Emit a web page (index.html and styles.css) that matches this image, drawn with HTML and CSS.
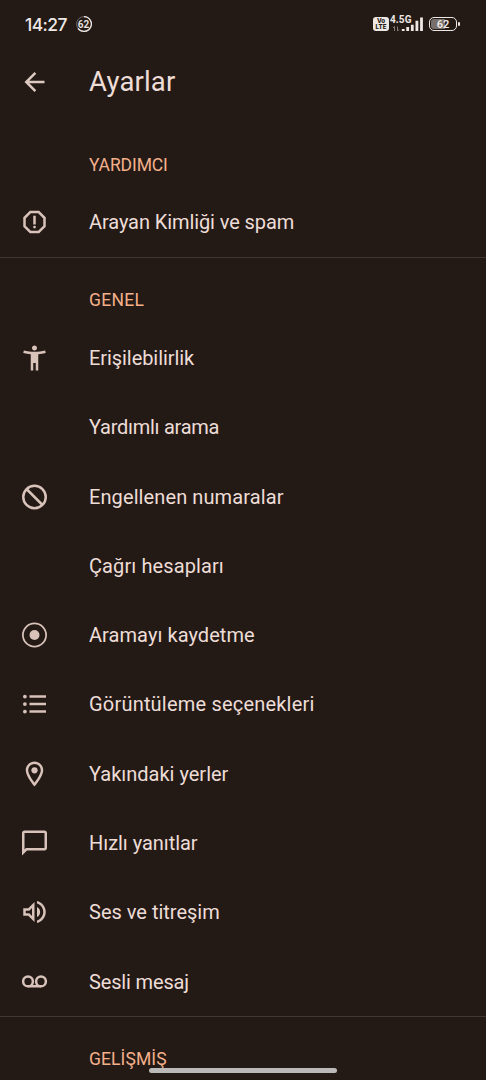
FILE: index.html
```html
<!DOCTYPE html>
<html lang="tr">
<head>
<meta charset="utf-8">
<title>Ayarlar</title>
<link rel="stylesheet" href="styles.css">
</head>
<body>
<div class="screen">
  <header class="status">
    <span class="clock">14:27</span>
    <span class="ring"><svg viewBox="0 0 18 18"><circle class="ring-dim" cx="9" cy="9" r="7.4"/><path class="ring-lit" d="M9 1.6A7.4 7.4 0 1 1 3 13.4"/></svg><b>62</b></span>
    <span class="volte"><b>Vo</b><b>LTE</b></span>
    <span class="network">
      <b class="gen">4.5G</b>
      <svg viewBox="0 0 34 18"><path class="data" d="M4.5 14.5V10M3 11.5l1.5-1.6M7.5 10v4.5M9 13l-1.5 1.6"/><path class="bars" d="M13.2 12.5v2M17.7 10.5v4M22.3 8.3v6.200M26.900 4.200v10.300M31.500 1v13.500"/></svg>
    </span>
    <span class="battery"><b>62</b></span>
  </header>
  <div class="appbar">
    <svg class="icon" viewBox="0 0 24 24"><path d="M20 11H7.830l5.590-5.590L12 4l-8 8 8 8 1.410-1.410L7.830 13H20z"/></svg>
    <h1>Ayarlar</h1>
  </div>
  <section class="group helper">
    <h2 class="l-yardimci">YARDIMCI</h2>
    <div class="row"><svg class="icon" viewBox="0 0 24 24"><path fill-rule="evenodd" d="M15.730 3H8.270L3 8.270v7.460L8.270 21h7.460L21 15.730V8.270zM19 14.900 14.900 19H9.100L5 14.900V9.100L9.100 5h5.800L19 9.100zM11 7h2v7h-2z"/><circle cx="12" cy="16" r="1.100"/></svg><span class="l-spam">Arayan Kimliği ve spam</span></div>
  </section>
  <section class="group general">
    <h2 class="l-genel">GENEL</h2>
    <div class="row"><svg class="icon" viewBox="0 0 24 24"><path d="M20.500 6c-2.610.7-5.670 1-8.500 1s-5.890-.3-8.500-1L3 8c1.860.5 4 .83 6 1v13h2v-6h2v6h2V9c2-.17 4.140-.5 6-1zM12 6c1.100 0 2-.9 2-2s-.9-2-2-2-2 .9-2 2 .9 2 2 2z"/></svg><span class="l-access">Erişilebilirlik</span></div>
    <div class="row"><i class="icon"></i><span class="l-assist">Yardımlı arama</span></div>
    <div class="row"><svg class="icon" viewBox="0 0 24 24"><g class="line"><circle cx="12" cy="12" r="9"/><path d="m5.600 5.600 12.800 12.800"/></g></svg><span class="l-block">Engellenen numaralar</span></div>
    <div class="row"><i class="icon"></i><span class="l-accounts">Çağrı hesapları</span></div>
    <div class="row"><svg class="icon" viewBox="0 0 24 24"><circle class="thin" cx="12" cy="12" r="9.300"/><circle cx="12" cy="12" r="4"/></svg><span class="l-record">Aramayı kaydetme</span></div>
    <div class="row"><svg class="icon" viewBox="0 0 24 24"><path d="M8 5h13.200v2H8zM8 11h13.200v2H8zM8 17h13.200v2H8z"/><circle cx="4.300" cy="6" r="1.500"/><circle cx="4.300" cy="12" r="1.500"/><circle cx="4.300" cy="18" r="1.500"/></svg><span class="l-display">Görüntüleme seçenekleri</span></div>
    <div class="row"><svg class="icon" viewBox="0 0 24 24"><path d="M12 2C8.130 2 5 5.130 5 9c0 5.250 7 13 7 13s7-7.750 7-13c0-3.870-3.130-7-7-7zM7 9c0-2.760 2.240-5 5-5s5 2.240 5 5c0 2.880-2.880 7.190-5 9.880C9.920 16.210 7 11.850 7 9z"/><circle cx="12" cy="9" r="2.500"/></svg><span class="l-nearby">Yakındaki yerler</span></div>
    <div class="row"><svg class="icon" viewBox="0 0 24 24"><path d="M20 2H4c-1.100 0-2 .9-2 2v18l4-4h14c1.100 0 2-.9 2-2V4c0-1.100-.9-2-2-2zm0 14H5.170L4 17.170V4h16z"/></svg><span class="l-quick">Hızlı yanıtlar</span></div>
    <div class="row"><svg class="icon" viewBox="0 0 24 24"><path d="M3 9v6h4l5 5V4L7 9zm7-.170v6.340L7.830 13H5v-2h2.830zM16.500 12A4.500 4.500 0 0 0 14 7.970v8.050A4.470 4.470 0 0 0 16.500 12zM14 3.230v2.060c2.890.86 5 3.540 5 6.710s-2.110 5.850-5 6.710v2.060c4.010-.91 7-4.490 7-8.770s-2.990-7.860-7-8.770z"/></svg><span class="l-sound">Ses ve titreşim</span></div>
    <div class="row"><svg class="icon" viewBox="0 0 24 24"><g class="line"><circle cx="6.800" cy="11.500" r="3.900"/><circle cx="17.200" cy="11.500" r="3.900"/><path d="M6.800 15.400h10.400"/></g></svg><span class="l-voice">Sesli mesaj</span></div>
  </section>
  <section class="group">
    <h2 class="l-advanced">GELİŞMİŞ</h2>
  </section>
  <div class="home-bar"></div>
</div>
</body>
</html>
```
FILE: styles.css
```css
* { box-sizing: border-box; }
body { margin: 0; background: #231a16; }
.screen { position: relative; width: 486px; height: 1080px; overflow: hidden; background: #231a16; color: #eeddd6; font-family: Roboto, "Noto Sans", sans-serif; }
.status { display: flex; align-items: center; height: 48px; padding: 0 26px 0 25px; color: #eee8e5; }
.clock { width: 42px; padding-top: 2px; font: 500 17.5px/20px Inter, sans-serif; letter-spacing: -.6px; white-space: nowrap; }
.ring { position: relative; display: flex; align-items: center; justify-content: center; width: 18px; height: 18px; margin-left: 7.5px; }
.ring svg { position: absolute; inset: 0; width: 18px; height: 18px; fill: none; }
.ring-dim { stroke: #716965; stroke-width: 1; }
.ring-lit { stroke: #eee8e5; stroke-width: 1.3; }
.ring b { padding-top: 1px; font: 600 10px/10px Roboto, sans-serif; }
.volte { display: flex; flex-direction: column; align-items: center; justify-content: center; width: 16px; height: 14px; margin-left: auto; border-radius: 3px; background: #eee8e5; color: #231a16; }
.volte b { font: 800 6.2px/6px Inter, sans-serif; }
.network { position: relative; width: 34px; height: 18px; margin-left: 1px; }
.network svg { display: block; width: 34px; height: 18px; fill: none; transform: translateY(1.5px); }
.gen { position: absolute; left: 0; top: 0; font: 700 10px/10px Roboto, sans-serif; letter-spacing: .1px; }
.bars { stroke: #eee8e5; stroke-width: 2.8; }
.data { stroke: #817975; stroke-width: 1; }
.battery { position: relative; display: flex; align-items: center; justify-content: center; width: 28px; height: 14px; margin: 0 3px 0 5px; border: 1.5px solid #eee8e5; border-radius: 5px; background: linear-gradient(90deg, #77706c 58%, transparent 58%); background-clip: content-box; padding: 1px; }
.battery::after { content: ""; position: absolute; right: -4px; top: 3.5px; width: 2px; height: 4px; background: #eee8e5; border-radius: 1px; }
.battery b { padding-top: 1px; font: 600 11px/11px Roboto, sans-serif; }
.appbar { display: flex; align-items: center; height: 68px; padding-left: 19px; }
.icon { flex: none; width: 31px; height: 30px; fill: #d8c2b9; }
.appbar .icon { fill: #ddc9c0; }
.line { fill: none; stroke: #d8c2b9; stroke-width: 2; }
.thin { fill: none; stroke: #d8c2b9; stroke-width: 1.4; }
h1 { margin: 0 0 0 39px; font-size: 27.5px; line-height: 34px; font-weight: 400; letter-spacing: .15px; }
.group { padding-top: 22px; border-bottom: 1px solid #403632; }
h2 { margin: 0; padding-left: 89px; height: 43.3px; font-size: 17.5px; line-height: 41px; font-weight: 400; color: #f4b08a; }
.helper { height: 142px; padding-top: 29px; }
.helper h2 { height: 42.500px; }
.general { height: 759px; }
.row { display: flex; align-items: center; height: 69.3px; padding-left: 19px; }
.row span { margin-left: 39px; font-size: 20px; line-height: 26px; white-space: nowrap; }
.l-yardimci { letter-spacing: -.1px; }
.l-genel { letter-spacing: .3px; }
.l-advanced { letter-spacing: .1px; }
.l-spam { letter-spacing: -.09px; }
.l-access { letter-spacing: -.07px; }
.l-assist { letter-spacing: -.26px; }
.l-block { letter-spacing: .1px; }
.l-accounts { letter-spacing: .1px; }
.l-record { letter-spacing: .06px; }
.l-display { letter-spacing: .2px; }
.l-quick { letter-spacing: -.04px; }
.l-voice { letter-spacing: -.15px; }
.home-bar { position: absolute; left: 149px; top: 1068px; width: 188px; height: 5px; border-radius: 3px; background: #bcbab9; }
```
